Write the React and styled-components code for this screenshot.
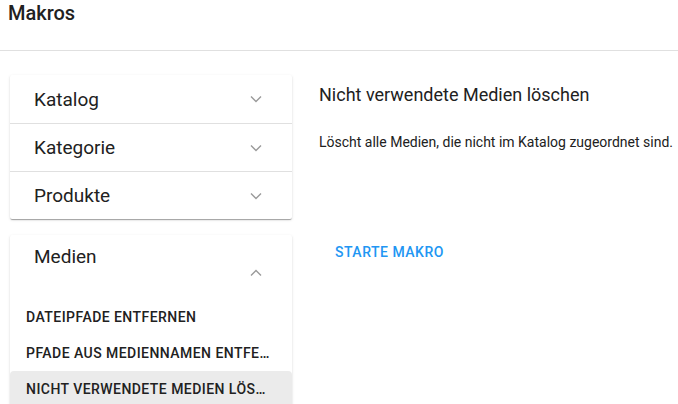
import React from "react";
import styled, { createGlobalStyle } from "styled-components";

const GlobalStyle = createGlobalStyle`
  body {
    margin: 0;
    font-family: Roboto, "Noto Sans", sans-serif;
    color: rgba(0, 0, 0, 0.87);
    background: #fff;
  }
`;

const groups = [
  { title: "Katalog" },
  { title: "Kategorie" },
  { title: "Produkte" },
];

const mediaItems = [
  "DATEIPFADE ENTFERNEN",
  "PFADE AUS MEDIENNAMEN ENTFERNEN",
  "NICHT VERWENDETE MEDIEN LÖSCHEN",
];

const Chevron = ({ up }) => (
  <svg width="12" height="8" viewBox="0 0 12 8">
    <polyline
      points={up ? "1,6.5 6,1.5 11,6.5" : "1,1.5 6,6.5 11,1.5"}
      fill="none"
      stroke="#9a9a9a"
      strokeWidth="1.4"
    />
  </svg>
);

const App = () => {
  return (
    <Page>
      <GlobalStyle />
      <Header>
        <Title>Makros</Title>
      </Header>
      <Main>
        <Sidebar>
          <Card>
            {groups.map(g => (
              <Row key={g.title}>
                <RowLabel>{g.title}</RowLabel>
                <Chevron />
              </Row>
            ))}
          </Card>
          <Card>
            <ExpandedHead>
              <RowLabel>Medien</RowLabel>
              <IconSlot>
                <Chevron up />
              </IconSlot>
            </ExpandedHead>
            {mediaItems.map((item, i) => (
              <Item key={item} active={i === 2}>
                <span>{item}</span>
              </Item>
            ))}
          </Card>
        </Sidebar>
        <Detail>
          <DetailTitle>Nicht verwendete Medien löschen</DetailTitle>
          <DetailText>
            Löscht alle Medien, die nicht im Katalog zugeordnet sind.
          </DetailText>
          <ActionButton>STARTE MAKRO</ActionButton>
        </Detail>
      </Main>
    </Page>
  );
};

const Page = styled.div`
  width: 678px;
  height: 404px;
  overflow: hidden;
`;

const Header = styled.header`
  height: 51px;
  border-bottom: 1px solid #e0e0e0;
  padding-left: 8px;
  box-sizing: border-box;
`;

const Title = styled.h1`
  margin: 0;
  padding-top: 0;
  font-size: 20px;
  font-weight: 500;
  line-height: 26px;
  color: #212121;
`;

const Main = styled.div`
  display: flex;
  padding: 24px 0 0 10px;
`;

const Sidebar = styled.div`
  width: 282px;
  flex-shrink: 0;
  display: flex;
  flex-direction: column;
  gap: 16px;
`;

const Card = styled.div`
  background: #fff;
  border-radius: 2px;
  box-shadow: 0 2px 1px -1px rgba(0, 0, 0, 0.2), 0 1px 1px 0 rgba(0, 0, 0, 0.14),
    0 1px 3px 0 rgba(0, 0, 0, 0.12);
  overflow: hidden;
`;

const Row = styled.div`
  height: 48px;
  display: flex;
  align-items: center;
  justify-content: space-between;
  padding: 0 30px 0 24px;
  box-sizing: border-box;
  & + & {
    border-top: 1px solid #e0e0e0;
  }
`;

const RowLabel = styled.span`
  font-size: 19px;
  color: #212121;
`;

const ExpandedHead = styled.div`
  height: 64px;
  display: flex;
  justify-content: space-between;
  padding: 10px 30px 0 24px;
  box-sizing: border-box;
`;

const IconSlot = styled.div`
  padding-top: 17px;
`;

const Item = styled.div`
  height: 36px;
  display: flex;
  align-items: center;
  padding: 0 18px 0 16px;
  font-size: 14px;
  font-weight: 500;
  letter-spacing: 0.45px;
  color: #212121;
  border-radius: 4px 4px 0 0;
  background: ${props => (props.active ? "#ebebeb" : "transparent")};
  span {
    overflow: hidden;
    white-space: nowrap;
    text-overflow: ellipsis;
  }
`;

const Detail = styled.div`
  padding-left: 27px;
  padding-top: 8px;
  display: flex;
  flex-direction: column;
  align-items: flex-start;
`;

const DetailTitle = styled.h2`
  margin: 0;
  font-size: 18px;
  font-weight: 400;
  line-height: 24px;
  color: #212121;
`;

const DetailText = styled.p`
  margin: 25px 0 0;
  font-size: 14px;
  line-height: 20px;
  color: #212121;
  white-space: nowrap;
`;

const ActionButton = styled.button`
  margin: 84px 0 0;
  padding: 8px 16px;
  border: none;
  background: none;
  font-family: inherit;
  font-size: 14px;
  font-weight: 500;
  letter-spacing: 0.5px;
  color: #2196f3;
  cursor: pointer;
`;

export default App;
